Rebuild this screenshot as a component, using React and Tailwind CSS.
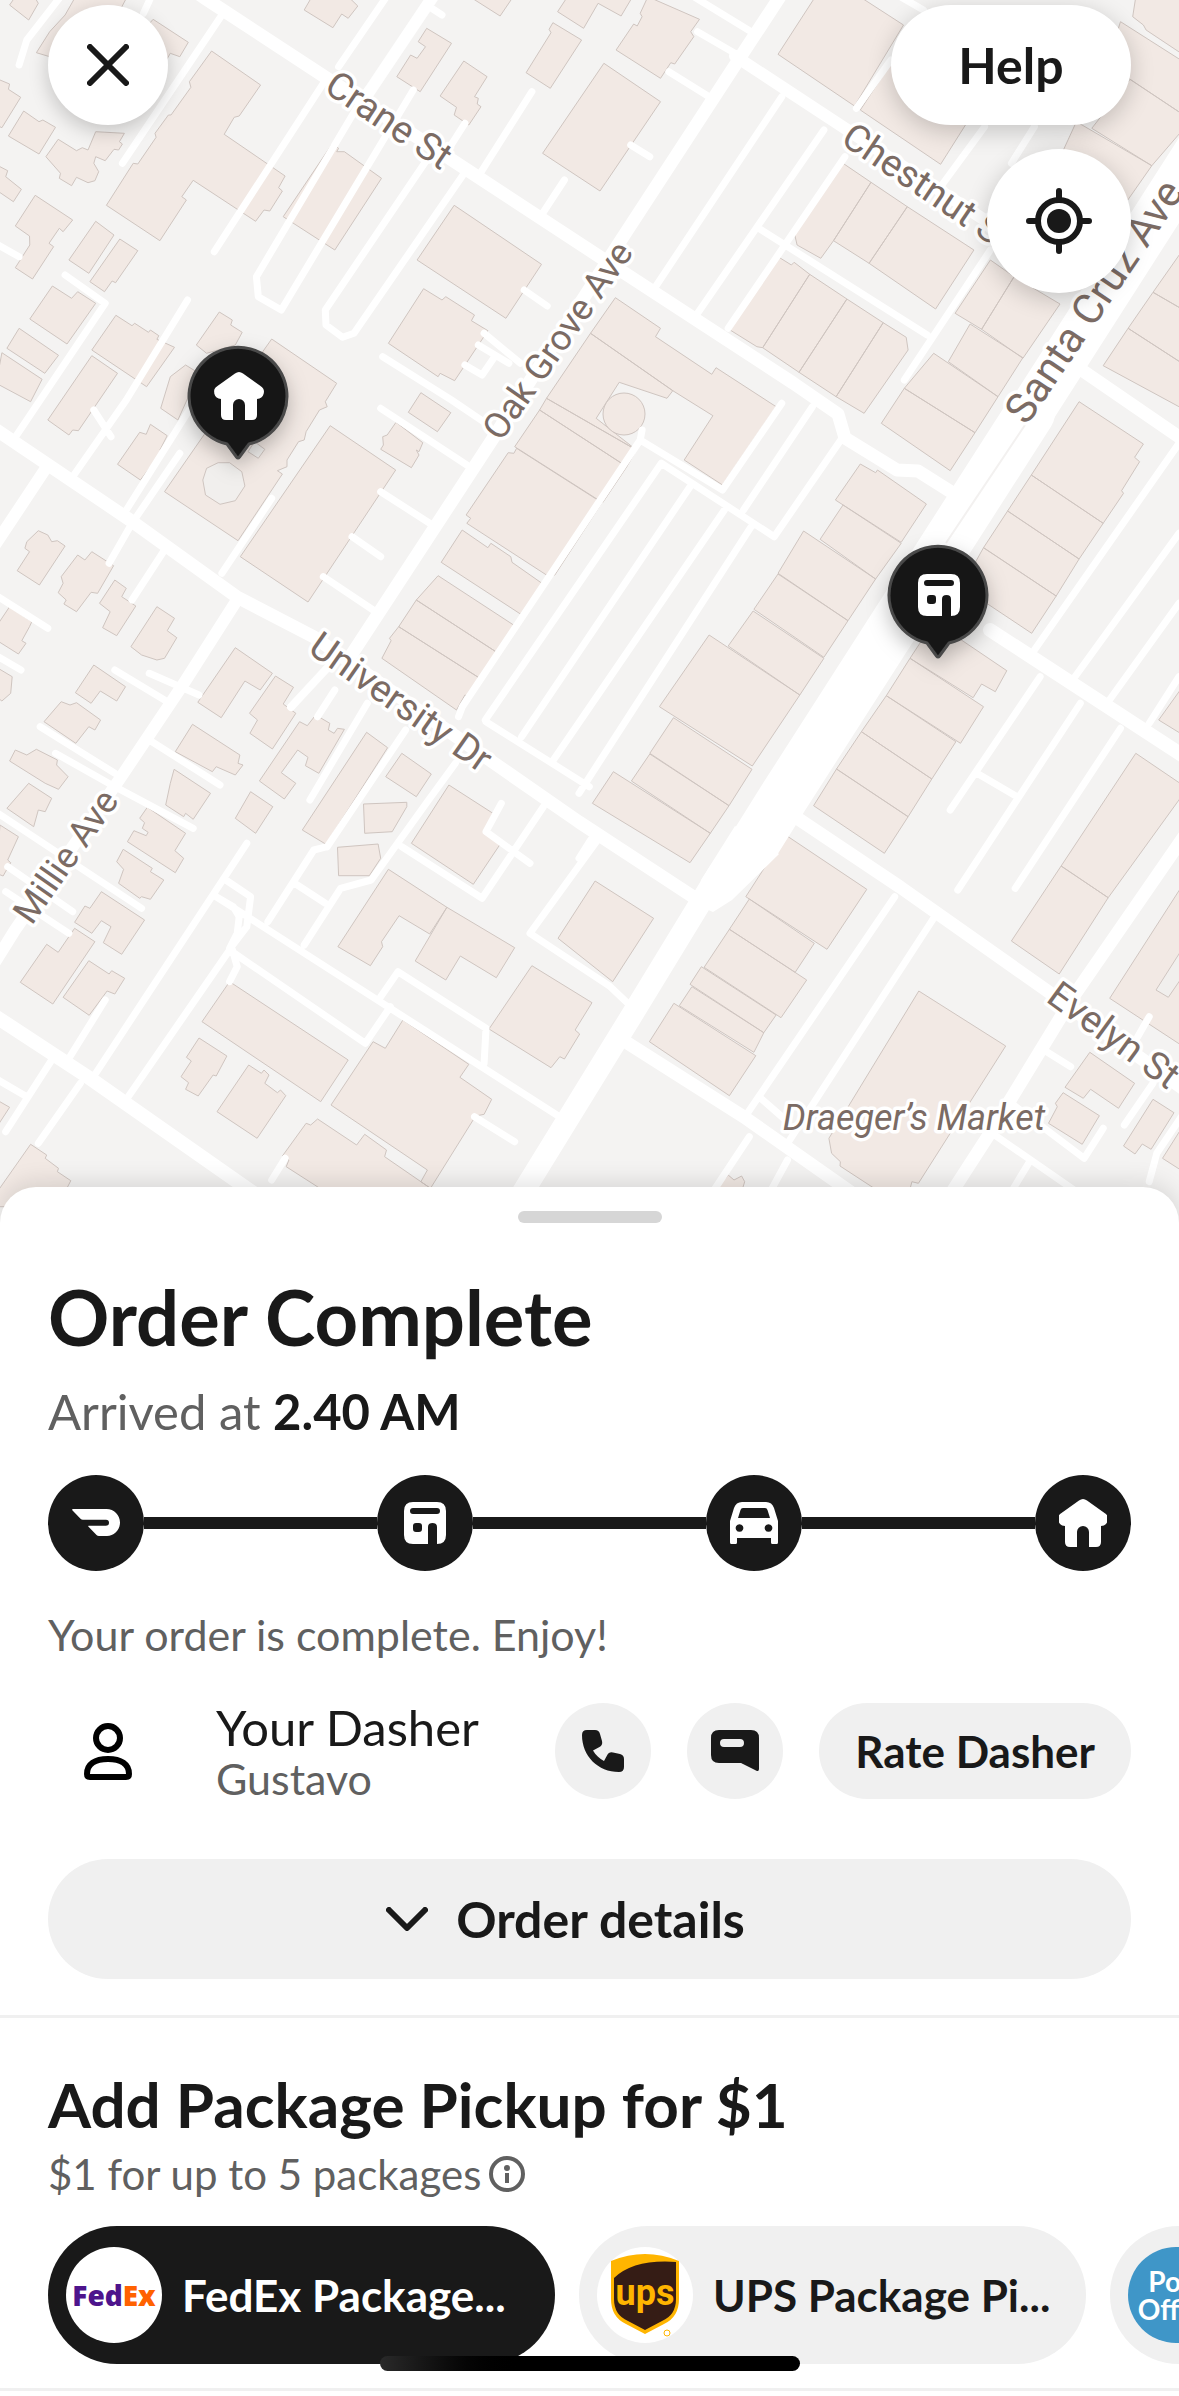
import React from "react";

/* ------------------------------------------------------------------ */
/* Map data: every sheet has its own origin; points are in sheet units */
/* ------------------------------------------------------------------ */

const UNIT_X = 600 / 1568;
const UNIT_Y = 1 / 3;

const SHEETS = [
  {
    x: 0,
    y: 0,
    buildings: [
      "25,15 75,60 100,10 90,-10 40,-10",
      "195,-5 330,-5 300,60 130,170 95,158 130,95 170,45",
      "400,58 492,127 470,170 445,160 420,210 330,150",
      "553,153 681,255 625,348 612,352 586,403 745,528 728,563 738,573 705,633 690,630 668,664 505,541 475,590 487,600 418,722 278,616 348,490 360,492 408,412 405,400 440,345 447,345 499,262 495,245",
      "0,240 25,252 22,268 54,292 5,383 -10,375 -10,240",
      "62,333 102,365 112,360 145,382 102,462 22,408",
      "152,418 200,452 215,443 230,450 250,395 325,400 312,425 320,432 310,450 298,448 275,482 250,470 245,490 258,515 248,542 230,548 200,532 187,557 155,535 158,520 120,470",
      "0,500 20,512 15,530 56,568 35,605 -10,570 -10,500",
      "92,586 190,660 165,695 155,685 128,730 140,740 85,837 40,803 78,735 77,708 40,678",
      "250,664 298,705 232,820 180,780",
      "313,717 360,752 302,848 293,843 273,875 235,845",
      "137,858 187,895 203,875 250,910 175,1032 78,957",
      "303,946 345,977 352,970 388,997 393,990 415,1007 410,1018 456,1042 383,1160 240,1050",
      "50,985 153,1066 117,1120 18,1045",
      "5,1058 110,1138 80,1205 -10,1150",
      "125,1260 180,1305 190,1290 205,1292 307,1120 240,1067",
      "573,936 607,960 603,975 633,997 615,1035 540,1060 513,1035",
      "485,1095 520,1120 465,1260 420,1225 445,1130",
      "795,30 870,83 893,42 910,55 935,18 910,-10 815,-10",
      "1115,85 1180,130 1098,275 1037,230 1073,165 1090,175 1112,140 1093,125",
      "1212,183 1273,230 1240,290 1250,295 1247,312 1257,320 1225,375 1187,345 1193,322 1150,288",
      "1230,-8 1307,48 1340,-8",
      "1445,68 1520,120 1438,265 1375,218 1440,98 1435,88",
      "868,432 885,445 880,455 900,455 997,535 875,750 740,650",
      "1187,616 1415,793 1322,955 1090,780",
      "1107,866 1155,900 1165,890 1240,945 1232,962 1275,992 1188,1142 1150,1120 1145,1130 1015,1030",
    ],
    roads: [
      "580,45 320,490",
      "165,-20 70,120 50,195",
      "395,-10 375,40",
      "1010,-10 885,200",
      "845,250 560,755",
      "960,270 670,830 675,890 735,930 1080,270",
      "1115,480 850,930 852,975 895,1012 925,1000 1210,525",
      "1215,370 1165,460",
      "1390,275 1255,520",
      "1475,540 1415,645",
      "1370,870 1430,918",
      "170,825 275,910 35,1320",
      "490,900 330,1200 190,1430",
      "-5,735 50,770",
      "1000,1070 1180,1200 1270,1270",
      "1265,1000 1360,1090",
      "1250,1035 1330,1090",
      "1215,1095 1260,1125 1290,1075",
      "1115,15 1155,45",
    ],
  },
  {
    x: 579,
    y: 0,
    buildings: [
      "65,190 213,305 55,573 -95,460",
      "-56,35 12,85 50,10 110,48 140,-10 -30,-10",
      "180,-10 315,58 292,95 300,110 250,192 240,188 213,235 97,150 143,72 152,78 165,50 160,40",
      "615,-5 740,-5 848,75 720,318 520,163",
      "735,330 815,190 1040,320 945,493",
      "690,490 763,547 665,722 632,775 570,735 563,700",
      "763,547 858,620 758,790 665,722",
      "858,620 1032,750 932,927 758,790",
      "520,770 555,795 562,787 603,823 480,1043 465,1040 395,990",
      "603,823 700,897 575,1117 480,1043",
      "700,897 795,968 672,1190 575,1117",
      "795,968 855,1012 860,1050 745,1240 672,1190",
      "1075,780 1137,830 1052,988 983,940",
      "1137,830 1257,912 1160,1075 1052,988",
      "1022,972 1160,1073 1095,1190 965,1085",
      "927,1060 1095,1190 1035,1298 850,1165",
      "850,1165 1035,1298 970,1412 790,1270",
      "1415,65 1600,200 1600,360 1440,238 1380,190",
      "1440,238 1600,360 1497,497 1340,385",
      "1300,365 1497,497 1425,615 1250,490",
      "1590,730 1500,877 1640,970",
      "1500,877 1640,970 1590,1100 1435,985",
      "1435,985 1590,1100 1600,1240 1370,1097",
      "1455,-10 1447,50 1475,75 1482,90 1600,180 1600,-10",
      "95,893 213,985 200,1010 347,1123 358,1103 515,1220 375,1455 275,1380 350,1247 245,1172 30,1000",
      "30,1000 245,1172 230,1195 105,1147 45,1255 150,1350 -85,1195",
      "-103,1230 -85,1195 150,1350 125,1400",
      "-103,1230 125,1400 62,1508 -168,1340",
    ],
    roads: [
      "300,-10 450,95",
      "310,95 415,165",
      "235,215 340,290",
      "530,290 200,860",
      "640,390 310,940",
      "695,470 390,985",
      "470,685 910,1005",
      "135,435 185,470",
      "840,-10 900,30",
      "815,180 725,325",
      "1190,380 1130,490",
      "1075,750 850,1140",
      "1060,380 945,560",
    ],
  },
  {
    x: 0,
    y: 400,
    buildings: [
      "710,-183 880,-50 850,5 855,20 835,30 800,95 795,120 780,125 750,180 750,200 725,212 738,222 622,422 430,275 560,60",
      "1100,-22 1178,38 1143,95 1067,37",
      "1350,145 1573,308 1450,525 1435,530 1220,370 1230,355 1218,345 1328,158 1343,160",
      "1208,390 1275,443 1283,430 1335,470 1338,487 1420,553 1368,648 1153,487",
      "1145,527 1353,683 1305,762 1088,600",
      "1088,600 1305,762 1258,838 1042,680",
      "1042,680 1258,838 1230,892 1215,885 1193,930 998,775 1022,722 1018,715",
      "863,77 1034,210 805,606 628,470",
      "1035,67 1105,128 1095,155 1088,150 1095,165 1075,203 995,148 1002,135 1000,110 1012,105",
      "100,392 125,405 135,425 150,422 170,438 103,555 45,512 77,455 65,445 70,425",
      "240,455 297,497 255,580 238,577 200,635 167,612 173,600 152,578 165,550 160,530 203,465 222,480",
      "300,540 330,565 318,590 355,618 305,707 268,683 288,635 260,610",
      "410,620 456,655 437,692 462,713 430,775 410,780 370,765 342,740",
      "393,73 437,107 418,150 423,155 367,240 307,193 365,97 382,103",
      "615,743 712,820 680,870 640,843 578,953 517,907",
      "720,828 767,862 740,912 773,940 712,1047 653,1000 673,960 652,940",
      "783,965 803,977 825,945 862,970 858,990 873,1000 882,985 900,988 833,1120 798,1097 805,1072 778,1050 735,1118 773,1150 743,1197 678,1143",
      "503,973 627,1065 622,1090 635,1095 615,1125 565,1100 555,1115 458,1055",
      "958,997 1013,1043 852,1333 790,1290",
      "1050,1060 1127,1122 1088,1190 1008,1130",
      "25,620 83,665 77,680 57,722 68,730 48,762 -10,720 -10,680",
      "245,795 328,860 305,903 262,873 238,910 197,878",
      "160,905 183,915 200,908 263,960 248,990 232,980 198,1030 115,965",
      "40,1050 70,1065 95,1048 150,1080 148,1095 178,1130 153,1168 118,1150 25,1083",
      "-5,805 32,830 28,880 5,903 -10,890",
      "75,1150 135,1195 118,1235 100,1230 88,1280 18,1225",
      "455,1108 550,1180 505,1258 485,1240 480,1250 433,1215 445,1150",
    ],
    courtyards: [
      "540,205 570,188 600,188 632,215 640,258 615,302 575,313 537,285 530,240",
      "665,125 692,148 675,175 648,155",
    ],
    roads: [
      "245,30 290,110",
      "500,20 330,330",
      "470,160 345,370 285,490",
      "430,450 345,600",
      "710,295 580,520",
      "995,25 1220,195",
      "995,275 1130,375",
      "920,410 995,470",
      "845,530 975,630",
      "-5,590 125,685",
      "-5,770 55,810",
      "300,810 430,900",
      "390,820 520,885",
      "105,980 300,1120",
      "145,1060 300,1160 505,1285",
      "390,1020 575,1155",
      "960,910 810,1200",
      "1060,990 855,1340",
      "875,870 830,950",
      "1190,1090 1120,1200",
      "1270,965 1540,1160",
    ],
  },
  {
    x: 579,
    y: 400,
    buildings: [
      "735,192 775,218 780,210 908,312 842,427 670,300",
      "690,315 842,430 775,537 630,418",
      "587,393 775,537 703,662 520,520",
      "520,522 703,662 640,772 457,628",
      "455,633 640,775 577,885 390,738",
      "340,705 577,885 453,1098 210,920",
      "247,953 452,1108 392,1217 185,1060",
      "185,1062 392,1217 343,1300 137,1143",
      "90,1115 343,1300 290,1388 35,1210",
      "1307,5 1475,132 1452,172 1465,185 1418,272 1423,280 1370,370 1182,225",
      "1182,225 1370,370 1307,477 1120,333",
      "1120,333 1307,477 1247,588 1057,443",
      "1057,443 1247,588 1183,700 1000,560",
      "905,705 980,705 1118,812 1088,875 1052,852 1030,893 865,775",
      "865,775 1057,920 997,1030 803,887",
      "803,887 985,1025 922,1137 738,995",
      "738,995 922,1137 860,1250 673,1107",
      "673,1107 860,1250 798,1360 613,1217",
      "1455,1060 1590,1165 1383,1493 1260,1398",
      "1590,840 1515,960 1600,1020",
    ],
    roads: [
      "165,90 160,120 -305,920 -315,950",
      "160,120 375,270 530,10",
      "510,410 215,190 -245,960",
      "510,410 690,110",
      "610,20 430,330",
      "290,260 -150,1010",
      "380,330 -70,1085",
      "450,380 0,1180",
      "1568,130 1190,750",
      "1568,400 1290,840",
      "1568,610 1380,910",
      "1568,830 1490,970",
      "1205,830 970,1230",
      "1310,910 990,1470",
      "1145,1190 1040,1120",
      "1415,985 1140,1465",
    ],
  },
  {
    x: 0,
    y: 800,
    buildings: [
      "655,-25 713,20 668,100 615,55",
      "1173,-45 1288,40 1265,92 1307,133 1237,253 1075,130",
      "0,75 48,110 20,180 28,188 8,228 -10,220",
      "385,22 485,100 457,152 480,175 458,218 333,125 350,92 382,107 387,97 372,85 378,68 365,55",
      "322,148 398,205 393,215 428,240 393,298 370,290 365,295 310,250 323,208 305,185",
      "265,275 378,360 318,463 270,428 290,380 265,362 240,400 195,367 222,318 235,325",
      "195,385 248,425 138,612 53,547 122,433 152,457",
      "232,482 285,522 292,512 326,535 300,582 280,573 233,646 165,592",
      "600,545 910,780 838,905 528,665",
      "520,714 593,768 565,828 557,825 518,888 485,868 493,848 473,830 500,783 487,772",
      "650,795 683,820 690,810 703,825 692,850 725,878 733,870 747,887 672,1015 567,935",
      "1053,660 1225,793 1202,832 1285,898 1265,943 1243,948 1125,1165 1100,1145 1117,1110 865,915 975,725 1007,745",
      "830,957 932,1035 953,1003 1010,1050 1005,1070 1125,1165 1110,1190 870,1190 748,1100 755,1080 738,1068 800,970 812,975",
      "1015,208 1168,322 1123,402 1043,347 997,425 1000,440 968,497 883,440",
      "1168,322 1345,443 1297,533 1203,468 1165,540 1085,483",
      "1390,497 1547,608 1503,690 1515,702 1475,777 1463,770 1440,803 1278,687",
      "950,12 1063,7 1063,20 1025,95 953,100",
      "882,142 988,132 995,175 965,227 885,227",
      "80,1033 122,1065 118,1075 153,1105 150,1115 185,1142 150,1220 -10,1220 -10,1180",
      "-5,902 25,922 -5,975",
    ],
    roads: [
      "645,130 250,820",
      "590,240 655,290 645,380 605,440 620,500 600,545",
      "565,290 610,320 625,350 620,400 600,445",
      "565,290 1455,945",
      "600,450 335,890",
      "600,450 955,730 1020,620",
      "995,590 1040,515 1270,685 1265,790",
      "700,365 820,150 855,140",
      "770,250 850,310",
      "1120,0 970,240 890,265 795,435",
      "1050,140 1260,295 1420,20",
      "1385,190 1270,95 1310,10",
      "1568,110 1385,400 1595,560 1650,620",
      "1240,950 1345,1025",
      "745,1075 710,1140",
      "135,780 15,995",
      "210,850 100,1030",
      "275,600 180,775",
      "-5,840 70,890",
      "-5,40 370,325",
      "20,200 190,335",
      "15,275 180,400",
    ],
  },
  {
    x: 579,
    y: 800,
    buildings: [
      "42,243 195,355 88,545 -55,415",
      "540,105 752,268 648,448 436,290",
      "445,297 615,430 565,517 393,388",
      "393,388 595,540 528,653 327,502",
      "320,500 515,645 483,698 290,553",
      "295,560 483,698 457,757 262,617",
      "248,610 462,767 393,887 184,725",
      "888,573 1115,738 887,1150 870,1145 860,1190 805,1190 682,1098 683,1085 660,1060 653,1015",
      "1335,757 1452,850 1410,925 1337,868 1318,895 1270,862",
      "1265,878 1360,947 1315,1033 1227,970 1250,920 1245,910",
      "1500,898 1555,938 1495,1048 1472,1032 1453,1062 1423,1038",
      "1580,975 1525,1075 1600,1130",
      "1260,198 1383,293 1255,522 1130,423",
      "1600,215 1387,595 1600,755",
      "390,1125 405,1140 425,1128 433,1145 425,1175 350,1175",
    ],
    courtyards: ["1580,440 1508,570 1540,592 1580,525"],
    roads: [
      "825,290 440,940",
      "935,340 545,1030",
      "470,890 540,960",
      "445,1010 350,1175",
      "545,1080 500,1175",
      "30,120 0,175",
      "1215,750 1285,800",
      "1490,650 1460,710",
      "1500,850 1425,975",
      "1130,910 1320,1075 1370,985",
      "1080,1000 1300,1175",
      "1175,1090 1130,1175",
      "1580,940 1510,1060 1490,1145",
    ],
  },
];

/* Main streets, in map coordinates */
const STREETS = [
  { w: 13, p: "190,-12 203,-3 325,77 452,160 600,257 793,383 838,414 845,438 897,470 918,471 956,495 970,506" },
  { w: 13, p: "-5,429 130,520 237,597 314,637 494,763 579,822 698,900" },
  { w: 12, p: "735,56 843,127 1000,230" },
  { w: 14, p: "990,630 1185,757" },
  { w: 13, p: "1070,362 1185,441" },
  { w: 13, p: "785,810 900,887 1046,990 1185,1090" },
  { w: 14, p: "-5,1016 88,1077 255,1194" },
  { w: 13, p: "618,1037 744,1117 855,1195" },
  { w: 13, p: "783,-8 743,53 621,240 490,443 348,660" },
  { w: 8, p: "330,665 291,707" },
  { w: 12, p: "237,600 184,683 119,780 15,930 -5,962" },
  { w: 12, p: "46,468 -5,545" },
  { w: 12, p: "436,-8 367,95" },
  { w: 13, p: "1185,835 1073,997 992,1130 950,1195" },
  { w: 46, p: "1210,132 1030,413" },
  { w: 50, p: "1030,413 782,800 757,840" },
  { w: 22, p: "718,874 632,1015 515,1205" },
];

const STREET_LABELS = [
  { text: "Crane St", x: 389, y: 120, a: 34, size: 38 },
  { text: "Chestnut St", x: 928, y: 187, a: 34, size: 38 },
  { text: "Oak Grove Ave", x: 557, y: 340, a: -55, size: 36 },
  { text: "Santa Cruz Ave", x: 1095, y: 302, a: -56, size: 42 },
  { text: "University Dr", x: 401, y: 702, a: 35, size: 38 },
  { text: "Millie Ave", x: 65, y: 856, a: -55, size: 36 },
  { text: "Evelyn St", x: 1114, y: 1035, a: 36, size: 38 },
];

function toPath(points, sheet, closed) {
  const d = points
    .split(" ")
    .map((pair) => {
      const [x, y] = pair.split(",").map(Number);
      return `${(sheet.x + x * UNIT_X).toFixed(1)} ${(sheet.y + y * UNIT_Y).toFixed(1)}`;
    })
    .join("L");
  return `M${d}${closed ? "Z" : ""}`;
}

const BUILDINGS = SHEETS.flatMap((s) => s.buildings.map((b) => toPath(b, s, true))).join("");
const COURTYARDS = SHEETS.flatMap((s) => (s.courtyards || []).map((b) => toPath(b, s, true))).join("");
const LANES = SHEETS.flatMap((s) => s.roads.map((r) => toPath(r, s, false))).join("");

/* ------------------------------------------------------------------ */
/* Icons                                                               */
/* ------------------------------------------------------------------ */

const HOME_PATH =
  "M20 1.5Q24 -1.5 28 1.5L45.5 14A7 7 0 0 1 42 27V43Q42 48 37 48H30V33a6 6 0 0 0-12 0V48H11Q6 48 6 43V27A7 7 0 0 1 2.5 14Z";
const STORE_PATH =
  "M9 0H33Q42 0 42 9V33Q42 42 33 42V25q0-4-4.500-4t-4.500 4V42H9Q0 42 0 33V9Q0 0 9 0ZM9 6a3 3 0 0 0 0 6H33a3 3 0 0 0 0-6ZM12 21q-3 0-3 3v3q0 3 3 3h3q3 0 3-3v-3q0-3-3-3Z";

function HomeIcon() {
  return (
    <svg className="size-12" viewBox="0 0 48 48" fill="currentColor" aria-hidden="true">
      <path d={HOME_PATH} />
    </svg>
  );
}

function StoreIcon() {
  return (
    <svg className="size-[42px]" viewBox="0 0 42 42" fill="currentColor" fillRule="evenodd" aria-hidden="true">
      <path d={STORE_PATH} />
    </svg>
  );
}

function DashIcon() {
  return (
    <svg className="h-7 w-12" viewBox="0 0 48 28" fill="currentColor" aria-hidden="true">
      <path d="M1 0H34.500C42 0 48 6 48 13.500S42 27 35 27H27Q25.500 27 24.500 26L16.300 17.500Q16 17 16.500 16.700H34a3 3 0 0 0 0-6H11Q9.500 10.700 8.500 9.700L.3 1.200Q-.3 0 1 0Z" />
    </svg>
  );
}

function CarIcon() {
  return (
    <svg className="h-[42px] w-12" viewBox="0 0 48 42" fill="currentColor" fillRule="evenodd" aria-hidden="true">
      <path d="M1.500 42Q0 42 0 40.500V19L4 6Q6 0 12 0H36Q42 0 44 6L48 19V40.500Q48 42 46.500 42H42.500Q41 42 41 40.500V36H7V40.500Q7 42 5.500 42ZM8 16H40L37.500 8Q37 6 35 6H13Q11 6 10.500 8ZM9.500 22.200a3.800 3.800 0 1 0 .01 0ZM38.500 22.200a3.800 3.800 0 1 0 .01 0Z" />
    </svg>
  );
}

function CloseIcon() {
  return (
    <svg className="size-[42px]" viewBox="0 0 42 42" fill="none" stroke="currentColor" strokeWidth="6" strokeLinecap="round" aria-hidden="true">
      <path d="M3 3L39 39M39 3L3 39" />
    </svg>
  );
}

function LocateIcon() {
  return (
    <svg className="size-[66px]" viewBox="0 0 66 66" fill="none" stroke="currentColor" strokeWidth="6" strokeLinecap="round" aria-hidden="true">
      <circle cx="33" cy="33" r="21" />
      <circle cx="33" cy="33" r="12" fill="currentColor" stroke="none" />
      <path d="M33 3V12M33 54V63M3 33H12M54 33H63" />
    </svg>
  );
}

function PersonIcon() {
  return (
    <svg className="h-[57px] w-12" viewBox="0 0 48 57" fill="none" stroke="currentColor" strokeWidth="6" strokeLinejoin="round" aria-hidden="true">
      <circle cx="24" cy="15" r="12" />
      <path d="M3 51C3 41 11 36 24 36S45 41 45 51Q45 54 42 54H6Q3 54 3 51Z" />
    </svg>
  );
}

function PhoneIcon() {
  return (
    <svg className="size-[42px]" viewBox="0 0 42 42" fill="currentColor" aria-hidden="true">
      <path d="M5 0H13Q17 0 18 4L20 11Q21 15 17.500 17L11 20.500C13.500 25 17.500 28.500 22 31L25 25.500Q27 21.500 31 22.500L38 24Q42 25 42 29V37Q42 42 37 42C16 42 0 26 0 5Q0 0 5 0Z" />
    </svg>
  );
}

function MessageIcon() {
  return (
    <svg className="h-[42px] w-12" viewBox="0 0 48 42" fill="currentColor" fillRule="evenodd" aria-hidden="true">
      <path d="M8 0H40Q48 0 48 8V39Q48 42 45 40.500L30 33H8Q0 33 0 25V8Q0 0 8 0ZM13 9a4 4 0 0 0 0 8H29a4 4 0 0 0 0-8Z" />
    </svg>
  );
}

function ChevronIcon() {
  return (
    <svg className="h-6 w-[42px]" viewBox="0 0 42 24" fill="none" stroke="currentColor" strokeWidth="6" strokeLinecap="round" strokeLinejoin="round" aria-hidden="true">
      <path d="M3 3L21 21L39 3" />
    </svg>
  );
}

function InfoIcon() {
  return (
    <svg className="size-9" viewBox="0 0 36 36" fill="none" stroke="currentColor" strokeWidth="4" aria-hidden="true">
      <circle cx="18" cy="18" r="16" />
      <circle cx="18" cy="12" r="3" fill="currentColor" stroke="none" />
      <path d="M18 17V27" />
    </svg>
  );
}

function FedExLogo() {
  return (
    <span className="flex size-24 shrink-0 items-center justify-center rounded-full bg-white font-[Open_Sans] text-[28px] leading-none font-extrabold">
      <span className="text-[#4d148c]">Fed</span>
      <span className="text-[#ff6200]">Ex</span>
    </span>
  );
}

function UpsLogo() {
  return (
    <span className="flex size-24 shrink-0 items-center justify-center rounded-full bg-white">
      <svg className="size-24" viewBox="0 0 96 96" role="img" aria-label="UPS">
        <path d="M14 14Q48 0 82 14V52Q82 70 67 77L48 87L29 77Q14 70 14 52Z" fill="#ffb500" />
        <path d="M17 31Q37 12 79 15V52Q79 68 65 74L48 83L31 74Q17 68 17 52Z" fill="#351c15" />
        <text x="48" y="58" textAnchor="middle" fill="#ffb500" fontFamily="Roboto, sans-serif" fontWeight="700" fontSize="36">
          ups
        </text>
        <circle cx="70" cy="86" r="3" fill="none" stroke="#ffb500" strokeWidth="1" />
      </svg>
    </span>
  );
}

function PostOfficeLogo() {
  return (
    <span className="flex size-24 shrink-0 flex-col items-center justify-center rounded-full bg-[#3f96c8] text-[28px] leading-7 font-bold text-white">
      <span>Post</span>
      <span>Office</span>
    </span>
  );
}

/* ------------------------------------------------------------------ */
/* Map                                                                 */
/* ------------------------------------------------------------------ */

function Pin({ x, y, icon, iconWidth, iconHeight }) {
  return (
    <g transform={`translate(${x} ${y})`} filter="url(#pin-shadow)">
      <path
        d="M-11 48A49 49 0 1 1 11 48L1.500 61Q0 63 -1.500 61Z"
        fill="#191919"
        stroke="#4a4a4a"
        strokeWidth="3"
      />
      <path
        d={icon}
        fill="#fff"
        fillRule="evenodd"
        transform={`translate(${-iconWidth / 2 + 1} ${-iconHeight / 2})`}
      />
    </g>
  );
}

function StreetMap() {
  return (
    <svg
      className="block aspect-[1179/1236] w-full bg-[#f4f3f2]"
      viewBox="0 0 1179 1236"
      role="img"
      aria-label="Delivery map"
    >
      <defs>
        <filter id="pin-shadow" x="-50%" y="-50%" width="200%" height="200%">
          <feDropShadow dx="0" dy="8" stdDeviation="10" floodColor="#000" floodOpacity="0.25" />
        </filter>
      </defs>
      <g fill="#f2e9e4" stroke="#cfc5c0" strokeWidth="1">
        <path d={BUILDINGS} />
        <circle cx="624" cy="414" r="21" />
        <path d={COURTYARDS} fill="#f1efed" />
      </g>
      <g fill="none" stroke="#fff" strokeLinejoin="round" strokeLinecap="round">
        <path d={LANES} strokeWidth="7" />
        {STREETS.map((s) => (
          <polyline key={s.p} points={s.p} strokeWidth={s.w} />
        ))}
      </g>
      <path d="M735 826L701 880L697 905L713 912L732 900L779 854Z" fill="#fff" />
      <path d="M1025 425L946 543" stroke="#f3f1f0" strokeWidth="2" />
      <g
        fill="#7b6b64"
        stroke="#fff"
        strokeWidth="7"
        strokeLinejoin="round"
        paintOrder="stroke"
        fontFamily="Roboto, sans-serif"
        textAnchor="middle"
      >
        {STREET_LABELS.map((l) => (
          <text key={l.text} transform={`translate(${l.x} ${l.y}) rotate(${l.a})`} y="13" fontSize={l.size}>
            {l.text}
          </text>
        ))}
        <text x="914" y="1130" fontStyle="italic" fontSize="36">
          Draeger’s Market
        </text>
      </g>
      <Pin x={238} y={396} icon={HOME_PATH} iconWidth={48} iconHeight={48} />
      <Pin x={938} y={595} icon={STORE_PATH} iconWidth={42} iconHeight={42} />
    </svg>
  );
}

/* ------------------------------------------------------------------ */
/* Sheet                                                               */
/* ------------------------------------------------------------------ */

const STEPS = [
  { label: "Order placed", Icon: DashIcon },
  { label: "At the store", Icon: StoreIcon },
  { label: "On the way", Icon: CarIcon },
  { label: "Delivered", Icon: HomeIcon },
];

function Progress() {
  return (
    <ol className="mt-9 flex items-center">
      {STEPS.map(({ label, Icon }, i) => (
        <li key={label} aria-label={label} className={i === 0 ? "flex items-center" : "flex flex-1 items-center"}>
          {i > 0 && <span className="h-3 flex-1 bg-[#191919]" />}
          <span className="flex size-24 items-center justify-center rounded-full bg-[#191919] text-white">
            <Icon />
          </span>
        </li>
      ))}
    </ol>
  );
}

function Chip({ logo, children, selected }) {
  return (
    <button
      type="button"
      aria-pressed={selected}
      className={
        selected
          ? "flex h-[138px] w-[507px] shrink-0 items-center gap-5 rounded-full bg-[#191919] px-[18px] text-white"
          : "flex h-[138px] w-[507px] shrink-0 items-center gap-5 rounded-full bg-[#f0f0f0] px-[18px]"
      }
    >
      {logo}
      <span className="text-[44px] leading-12 font-bold whitespace-nowrap">{children}</span>
    </button>
  );
}

export default function App() {
  return (
    <main className="relative w-full overflow-hidden bg-white font-[Lato,sans-serif] text-[#191919]">
      <StreetMap />

      <div className="absolute inset-x-0 top-0 flex items-start justify-between px-12 pt-[5px]">
        <button
          type="button"
          aria-label="Close"
          className="flex size-[120px] items-center justify-center rounded-full bg-white shadow-[0_6px_20px_rgba(0,0,0,0.2)]"
        >
          <CloseIcon />
        </button>
        <div className="flex flex-col items-end gap-6">
          <button
            type="button"
            className="h-[120px] w-60 rounded-full bg-white text-[50px] leading-14 font-bold shadow-[0_6px_24px_rgba(0,0,0,0.2)]"
          >
            Help
          </button>
          <button
            type="button"
            aria-label="Center the map"
            className="flex size-36 items-center justify-center rounded-full bg-white shadow-[0_6px_24px_rgba(0,0,0,0.2)]"
          >
            <LocateIcon />
          </button>
        </div>
      </div>

      <section className="relative -mt-[49px] rounded-t-[36px] bg-white pt-6 shadow-[0_-4px_24px_rgba(0,0,0,0.12)]">
        <div className="mx-auto h-3 w-36 rounded-full bg-[#d6d6d6]" />

        <div className="px-12 pb-9">
          <h1 className="mt-12 text-[76px] leading-[92px] font-bold">Order Complete</h1>
          <p className="mt-5 text-[49px] leading-14 text-[#606060]">
            Arrived at <strong className="font-bold text-[#191919]">2.40 AM</strong>
          </p>
          <Progress />
          <p className="mt-10 text-[43px] leading-12 text-[#606060]">Your order is complete. Enjoy!</p>

          <div className="mt-10 flex items-center gap-9">
            <div className="flex flex-1 items-center pl-9 text-black">
              <PersonIcon />
              <div className="ml-[84px]">
                <h2 className="text-[49px] leading-14 text-[#191919]">Your Dasher</h2>
                <p className="text-[43px] leading-12 text-[#606060]">Gustavo</p>
              </div>
            </div>
            <button type="button" aria-label="Call" className="flex size-24 items-center justify-center rounded-full bg-[#f0f0f0]">
              <PhoneIcon />
            </button>
            <button type="button" aria-label="Message" className="flex size-24 items-center justify-center rounded-full bg-[#f0f0f0]">
              <MessageIcon />
            </button>
            <button type="button" className="h-24 rounded-full bg-[#f0f0f0] px-9 text-[44px] leading-12 font-bold">
              Rate Dasher
            </button>
          </div>

          <button
            type="button"
            className="mt-14 flex h-[120px] w-full items-center justify-center gap-7 rounded-full bg-[#f0f0f0] pr-12 text-[50px] leading-14 font-bold"
          >
            <ChevronIcon />
            Order details
          </button>
        </div>

        <div className="border-y-[3px] border-[#f0f0f0] pt-12 pb-6 pl-12">
          <h2 className="text-[62px] leading-[76px] font-bold">Add Package Pickup for $1</h2>
          <p className="mt-2 flex items-center gap-2 text-[42px] leading-12 text-[#606060]">
            $1 for up to 5 packages
            <button type="button" aria-label="More information">
              <InfoIcon />
            </button>
          </p>
          <div className="mt-7 flex gap-6 overflow-hidden">
            <Chip selected logo={<FedExLogo />}>
              FedEx Package...
            </Chip>
            <Chip logo={<UpsLogo />}>UPS Package Pi...</Chip>
            <Chip logo={<PostOfficeLogo />} />
          </div>
        </div>
        <div className="h-1" />
        <div className="absolute bottom-6 left-1/2 h-[15px] w-[420px] -translate-x-1/2 rounded-full bg-linear-to-r from-[#2a2a2a] via-black via-35% to-black" />
      </section>
    </main>
  );
}
